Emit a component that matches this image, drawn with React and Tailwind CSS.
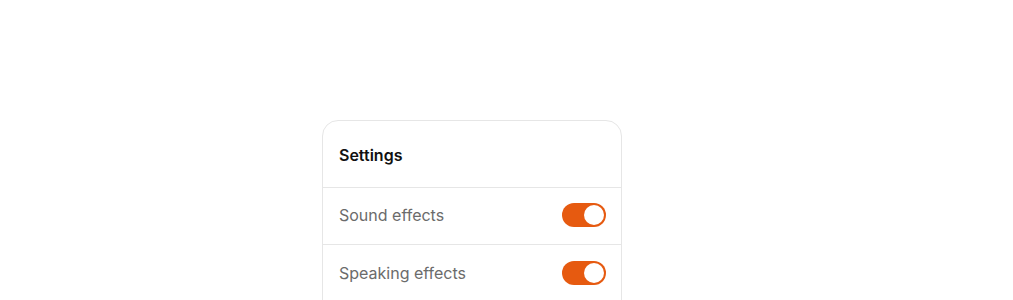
import React, { useState } from 'react';

function Toggle({ on, onChange }) {
  return (
    <button
      onClick={onChange}
      className={`flex h-6 w-11 items-center rounded-full p-[2px] ${on ? 'justify-end bg-[#e65a10]' : 'justify-start bg-gray-300'}`}
    >
      <span className="h-5 w-5 rounded-full bg-white" />
    </button>
  );
}

export default function App() {
  const [sound, setSound] = useState(true);
  const [speaking, setSpeaking] = useState(true);

  return (
    <div className="h-[300px] overflow-hidden bg-white pl-[322px] pt-[120px]" style={{ fontFamily: 'Inter, "Noto Sans", sans-serif' }}>
      <div className="w-[300px] overflow-hidden rounded-2xl border border-[#e6e6e6] bg-white pb-10">
        {/* Header */}
        <div className="flex h-[67px] items-center border-b border-[#e6e6e6] pl-4 pt-[2px]">
          <h2 className="text-base font-semibold text-[#111]">Settings</h2>
        </div>

        <div className="flex h-[57px] items-center justify-between border-b border-[#e6e6e6] pb-[2px] pl-4 pr-[15px]">
          <span className="text-base text-[#6b6b6b]">Sound effects</span>
          <Toggle on={sound} onChange={() => setSound(!sound)} />
        </div>
        <div className="flex h-[57px] items-center justify-between pb-[2px] pl-4 pr-[15px]">
          <span className="text-base text-[#6b6b6b]">Speaking effects</span>
          <Toggle on={speaking} onChange={() => setSpeaking(!speaking)} />
        </div>
      </div>
    </div>
  );
}
